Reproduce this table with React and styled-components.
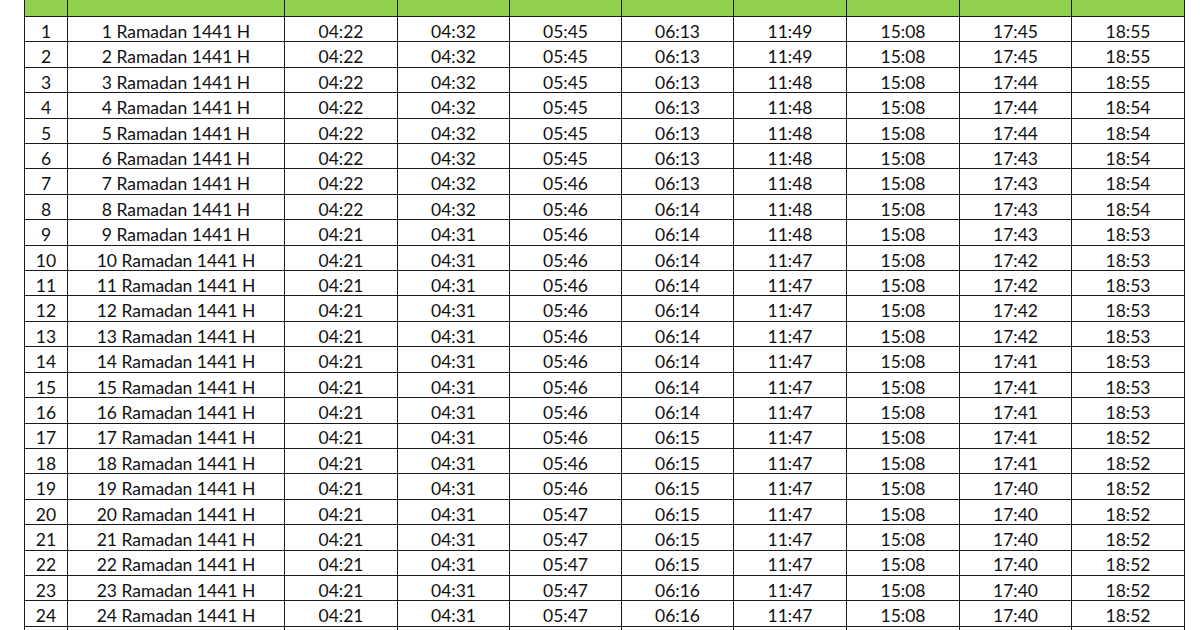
import React from "react";
import styled, { createGlobalStyle } from "styled-components";

const Global = createGlobalStyle`
  html, body { margin: 0; padding: 0; background: #fff; overflow: hidden; }
  body { font-family: "Lato", "Open Sans", sans-serif; color: #111; }
`;

const Page = styled.div`
  width: 1200px;
  height: 630px;
  overflow: hidden;
  padding-left: 24px;
  box-sizing: border-box;
`;

const Grid = styled.div`
  display: grid;
  grid-template-columns: 43px 217px 113px 112px 112px 112px 113px 113px 112px 113px;
  grid-template-rows: 17px;
  grid-auto-rows: 25.42px;
  width: max-content;
  border-left: 1px solid #1a1a1a;
`;

const HeadCell = styled.div`
  background: #92d050;
  border-right: 1px solid #1a1a1a;
  border-bottom: 1px solid #1a1a1a;
  box-sizing: border-box;
`;

const Cell = styled.div`
  border-right: 1px solid #1a1a1a;
  border-bottom: 1px solid #1a1a1a;
  box-sizing: border-box;
  display: flex;
  align-items: center;
  justify-content: center;
  font-size: 17.5px;
  line-height: 1;
  white-space: nowrap;
  padding-top: 5px;
`;

const runs = (spec) => spec.flatMap(([v, n]) => Array(n).fill(v));

const imsak = runs([["04:22", 8], ["04:21", 16]]);
const subuh = runs([["04:32", 8], ["04:31", 16]]);
const terbit = runs([["05:45", 6], ["05:46", 13], ["05:47", 5]]);
const dhuha = runs([["06:13", 7], ["06:14", 9], ["06:15", 6], ["06:16", 2]]);
const zuhur = runs([["11:49", 2], ["11:48", 7], ["11:47", 15]]);
const ashar = runs([["15:08", 24]]);
const maghrib = runs([["17:45", 2], ["17:44", 3], ["17:43", 4], ["17:42", 4], ["17:41", 5], ["17:40", 6]]);
const isya = runs([["18:55", 3], ["18:54", 5], ["18:53", 8], ["18:52", 8]]);

const rows = Array.from({ length: 24 }, (_, i) => [
  String(i + 1),
  `${i + 1} Ramadan 1441 H`,
  imsak[i],
  subuh[i],
  terbit[i],
  dhuha[i],
  zuhur[i],
  ashar[i],
  maghrib[i],
  isya[i],
]);

export default function App() {
  return (
    <>
      <Global />
      <Page>
        <Grid>
          {Array.from({ length: 10 }, (_, i) => (
            <HeadCell key={`h${i}`} />
          ))}
          {rows.map((r, ri) =>
            r.map((v, ci) => <Cell key={`${ri}-${ci}`}>{v}</Cell>)
          )}
          {Array.from({ length: 10 }, (_, i) => (
            <Cell key={`tail${i}`} />
          ))}
        </Grid>
      </Page>
    </>
  );
}
